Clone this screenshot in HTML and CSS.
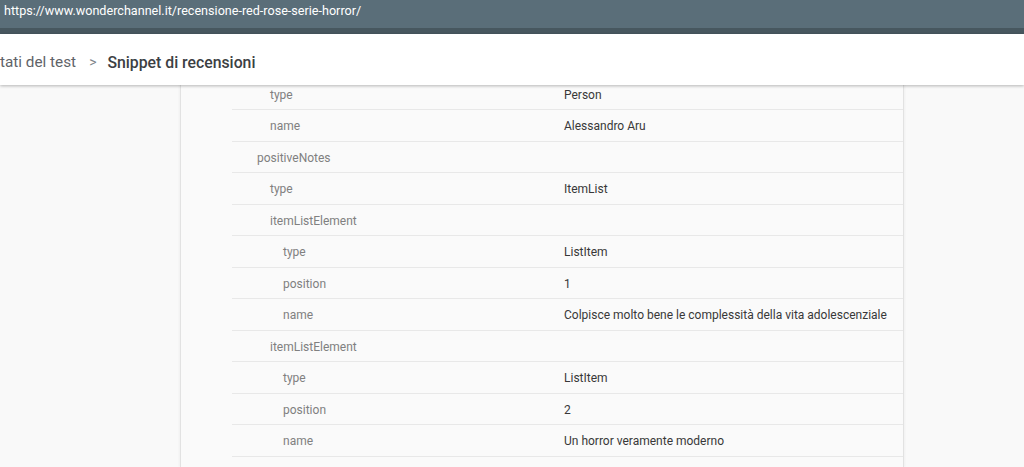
FILE: index.html
```html
<!DOCTYPE html>
<html lang="it">
<head>
  <meta charset="UTF-8">
  <meta name="viewport" content="width=device-width, initial-scale=1">
  <title>Snippet di recensioni</title>
  <link rel="stylesheet" href="styles.css">
</head>
<body>

  <div class="urlbar">
    <span class="url">https://www.wonderchannel.it/recensione-red-rose-serie-horror/</span>
  </div>

  <header class="crumbs">
    <span class="crumb">tati del test</span>
    <span class="chev">&gt;</span>
    <span class="crumb current">Snippet di recensioni</span>
  </header>

  <main class="main">
    <section class="panel">
      <div class="row"><div class="key lv2">type</div><div class="val">Person</div></div>
      <div class="row"><div class="key lv2">name</div><div class="val">Alessandro Aru</div></div>
      <div class="row"><div class="key lv1">positiveNotes</div><div class="val"></div></div>
      <div class="row"><div class="key lv2">type</div><div class="val">ItemList</div></div>
      <div class="row"><div class="key lv2">itemListElement</div><div class="val"></div></div>
      <div class="row"><div class="key lv3">type</div><div class="val">ListItem</div></div>
      <div class="row"><div class="key lv3">position</div><div class="val">1</div></div>
      <div class="row"><div class="key lv3">name</div><div class="val">Colpisce molto bene le complessità della vita adolescenziale</div></div>
      <div class="row"><div class="key lv2">itemListElement</div><div class="val"></div></div>
      <div class="row"><div class="key lv3">type</div><div class="val">ListItem</div></div>
      <div class="row"><div class="key lv3">position</div><div class="val">2</div></div>
      <div class="row"><div class="key lv3">name</div><div class="val">Un horror veramente moderno</div></div>
    </section>
  </main>

</body>
</html>
```

FILE: styles.css
```css
html, body {
  margin: 0;
  height: 100%;
  overflow: hidden;
}

body {
  font-family: Roboto, "Liberation Sans", Arial, sans-serif;
  background: #f9f9f9;
  display: flex;
  flex-direction: column;
}

.urlbar {
  height: 28px;
  background: #5a6e79;
  border-bottom: 6px solid #47575f;
  padding-left: 4px;
  display: flex;
  align-items: center;
}

.url {
  color: #fff;
  font-size: 12.6px;
  margin-top: -7px;
}

.crumbs {
  height: 46px;
  padding-top: 5px;
  background: #fff;
  box-shadow: 0 1px 3px rgba(0, 0, 0, 0.28);
  display: flex;
  align-items: center;
  position: relative;
  z-index: 2;
  font-size: 15.3px;
  color: #5f6368;
}

.chev {
  color: #80868b;
  margin: 0 11px 0 13px;
  font-size: 14px;
}

.crumb.current {
  color: #3c4043;
  font-weight: 500;
  font-size: 15.8px;
}

.main {
  flex: 1;
  overflow: hidden;
  display: flex;
}

.panel {
  margin-left: 181px;
  margin-top: -6.5px;
  width: 722px;
  padding-left: 51px;
  background: #fafafa;
  box-shadow: -1px 0 0 #e2e2e2, 1px 0 0 #e2e2e2, -2px 0 2px rgba(0, 0, 0, 0.04), 2px 0 2px rgba(0, 0, 0, 0.04);
  box-sizing: border-box;
}

.row {
  display: grid;
  grid-template-columns: 332px 1fr;
  align-items: center;
  height: 31.5px;
  padding-top: 2px;
  box-sizing: border-box;
  border-bottom: 1px solid #e8e8e8;
  font-size: 12px;
  white-space: nowrap;
}

.key {
  color: #808080;
}

.lv1 { padding-left: 25px; }
.lv2 { padding-left: 38px; }
.lv3 { padding-left: 51px; }

.val {
  color: #383838;
}
```
